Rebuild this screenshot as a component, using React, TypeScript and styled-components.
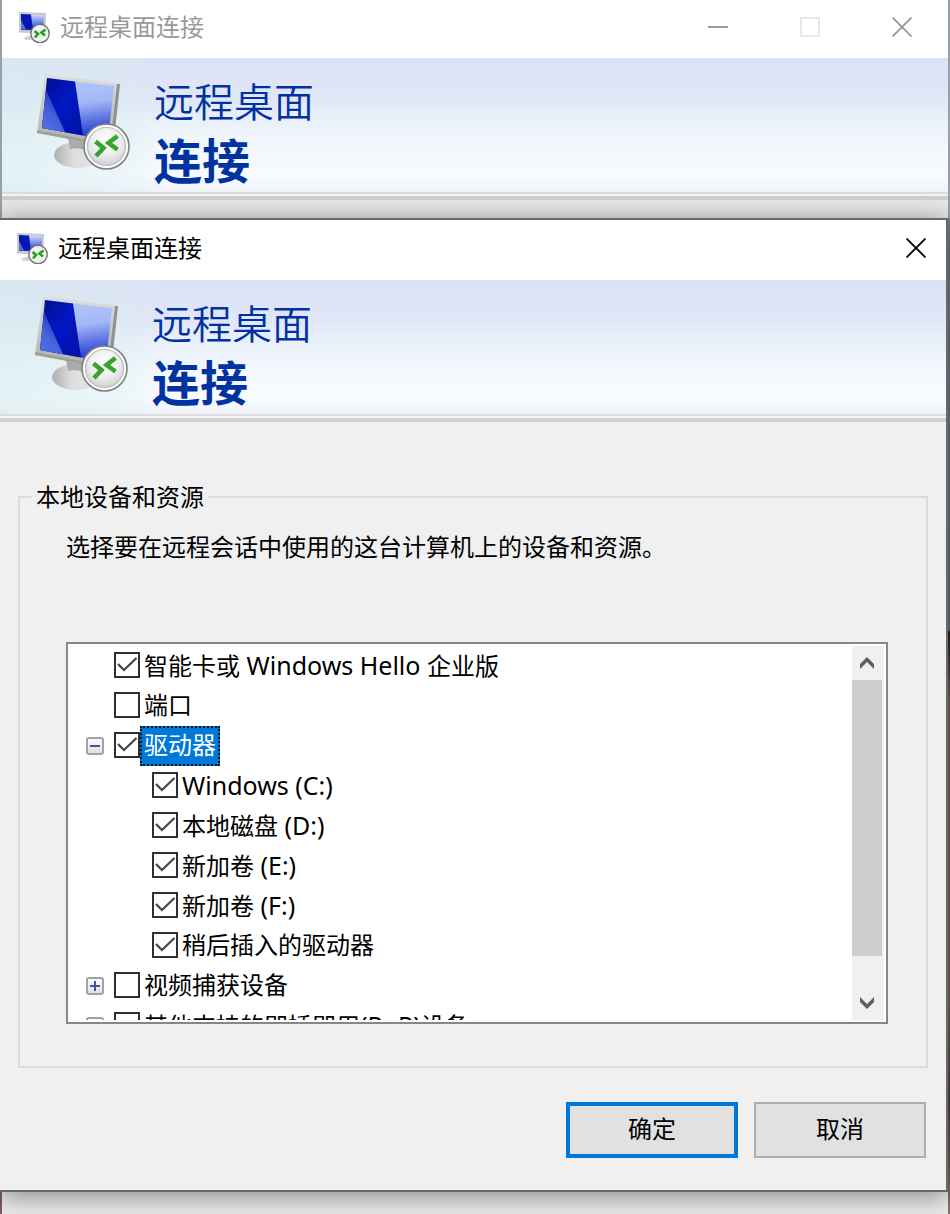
import React, { useId, useState } from "react";
import styled, { createGlobalStyle } from "styled-components";

const GlobalStyle = createGlobalStyle`
  * { box-sizing: border-box; }
  body {
    margin: 0;
    background: #f0f0f0;
    color: #000;
    font-family: "Noto Sans", "Noto Sans CJK SC", sans-serif;
    font-size: 24px;
    line-height: 28px;
  }
  button, input { font: inherit; color: inherit; margin: 0; padding: 0; }
`;

const Desktop = styled.div`
  display: flex;
  flex-direction: column;
  min-height: 100vh;
  overflow: hidden;
  background: linear-gradient(#80848e 0, #6d717a 630px, #2b2224 632px, #7b6466 700px, #7b6466 1000px, #4c4a48 1100px, #8a7274 100%);
`;

const BackWindow = styled.section`
  height: 218px;
  border: solid #989fa8;
  border-width: 0 2px;
  background: #e8e8e8;
`;

const BackFooter = styled.div`
  flex: 1;
  min-height: 22px;
  border-left: 2px solid #855a62;
  margin-right: 2px;
  background: #ececec;
`;

const Dialog = styled.section`
  position: relative;
  z-index: 1;
  margin-right: 2px;
  border: solid #69696c;
  border-width: 2px 2px 2px 0;
  background: #f0f0f0;
  box-shadow: 0 4px 26px rgba(0, 0, 0, 0.45);
`;

const TitleBar = styled.header<{ $active?: boolean }>`
  display: flex;
  align-items: center;
  height: ${(p) => (p.$active ? 60 : 58)}px;
  padding-left: 16px;
  padding-bottom: 4px;
  gap: 10px;
  background: #fff;
  color: ${(p) => (p.$active ? "#000" : "#999")};
`;

const TitleText = styled.span`
  flex: 1;
`;

const Controls = styled.div`
  display: flex;
  align-self: stretch;
`;

const ControlButton = styled.button<{ $narrow?: boolean }>`
  display: grid;
  place-items: center;
  width: ${(p) => (p.$narrow ? 60 : 92)}px;
  border: 0;
  background: none;
`;

const BannerBar = styled.div`
  display: flex;
  align-items: flex-start;
  gap: 22px;
  height: 134px;
  padding: 14px 32px 0;
  background:
    linear-gradient(90deg, rgba(214, 236, 238, 0.6), rgba(214, 236, 238, 0.3) 130px, rgba(214, 236, 238, 0) 160px),
    linear-gradient(#dde1f6, #e0e6f8 30%, #eaf0fa 46%, #f3f8fd 68%, #f8fbff 88%, #f0f3fa);
`;

const BannerTitle = styled.h1`
  margin: 0;
  font-size: 40px;
  font-weight: 350;
  line-height: 59px;
  color: #0033a0;
`;

const BannerStrong = styled.strong`
  display: block;
  font-size: 48px;
  font-weight: 700;
`;

const Divider = styled.div`
  height: 8px;
  border-top: 2px solid #dcdcdc;
  border-bottom: 4px solid #d0d0d0;
  background: #f4f4f4;
`;

const Content = styled.form`
  padding: 61px 18px 32px;
`;

const Group = styled.fieldset`
  min-width: 0;
  margin: 0;
  padding: 0;
  border: 2px solid #dcdcdc;
`;

const GroupLegend = styled.legend`
  margin-left: 12px;
  padding: 0 4px;
`;

const GroupBody = styled.div`
  padding: 22px 38px 42px 46px;
`;

const Description = styled.p`
  margin: 0 0 81px;
`;

const ListBox = styled.div`
  display: flex;
  height: 382px;
  padding: 2px;
  border: 2px solid #828790;
  background: #fff;
`;

const Tree = styled.ul`
  flex: 1;
  margin: 0;
  padding: 0;
  overflow: hidden;
  list-style: none;
`;

const TreeRow = styled.li<{ $child?: boolean }>`
  display: flex;
  align-items: center;
  height: 40px;
  padding-left: ${(p) => (p.$child ? 82 : 16)}px;
  white-space: nowrap;
`;

const ExpanderSlot = styled.span`
  display: flex;
  width: 28px;
`;

const Expander = styled.button`
  display: grid;
  place-items: center;
  width: 18px;
  height: 18px;
  border: 2px solid #a2a2a2;
  border-radius: 3px;
  background: linear-gradient(#fdfdfd, #dfdfdf);
`;

const CheckCell = styled.span`
  display: grid;
  width: 26px;
  height: 26px;
  margin-bottom: 2px;

  > * { grid-area: 1 / 1; }
`;

const CheckInput = styled.input`
  appearance: none;
  width: 26px;
  height: 26px;
  border: 2px solid #303030;
  background: #fff;
`;

const CheckMark = styled.svg`
  pointer-events: none;
`;

const RowLabel = styled.label<{ $selected?: boolean }>`
  height: 40px;
  padding: 0 2px;
  border: 2px dotted transparent;
  line-height: 34px;
  ${(p) => p.$selected && "background: #0078d7; color: #fff; border-color: #111;"}
`;

const LatinText = styled.span`
  font-size: 25px;
  white-space: pre;
`;

const ScrollBar = styled.div`
  display: flex;
  flex-direction: column;
  width: 32px;
  background: #f0f0f0;
`;

const ScrollButton = styled.button`
  display: grid;
  place-items: center;
  width: 30px;
  height: 34px;
  border: 0;
  background: none;
`;

const ScrollTrack = styled.div`
  flex: 1;
`;

const ScrollThumb = styled.div`
  width: 30px;
  height: 276px;
  background: #cdcdcd;
`;

const Actions = styled.div`
  display: flex;
  justify-content: flex-end;
  gap: 16px;
  padding: 34px 2px 0;
`;

const ActionButton = styled.button<{ $primary?: boolean }>`
  width: 172px;
  height: 56px;
  padding-bottom: 2px;
  border: ${(p) => (p.$primary ? "4px solid #0078d7" : "2px solid #adadad")};
  background: #e1e1e1;
`;

function CloseIcon() {
  return (
    <svg width="20" height="20" viewBox="0 0 20 20" fill="none" stroke="currentColor" strokeWidth="1.8">
      <path d="M.5 .5 19.500 19.500M19.500 .5 .5 19.500" />
    </svg>
  );
}

function SmallIcon() {
  const id = useId();
  return (
    <svg width="32" height="32" viewBox="0 0 32 32" aria-hidden="true">
      <defs>
        <linearGradient id={id} x1="0" y1="0" x2="0" y2="1">
          <stop offset="0" stopColor="#d5dfff" />
          <stop offset="1" stopColor="#1c38d6" />
        </linearGradient>
      </defs>
      <path d="M5 27.500 Q10 23 17 26V29H8Z" fill="#d2d2d0" />
      <path d="M1 1 28 2 27.500 23 1 21.500Z" fill="#c9c9c5" />
      <path d="M3 3 26 4 25.500 19 3 18.500Z" fill={`url(#${id})`} />
      <path d="M3 3 13 3.500 15 19 3 18.500Z" fill="#0518b4" />
      <path d="M3 9 8 18.500 3 18Z" fill="#5871dd" />
      <circle cx="22" cy="22.500" r="9.200" fill="#f2f3f1" stroke="#70736f" strokeWidth="1.400" />
      <path d="M16.500 20 20 23 17 26.500M27.500 18.500 23.500 21.500 27 24.500" fill="none" stroke="#23a01d" strokeWidth="2.600" />
    </svg>
  );
}

function MonitorIcon() {
  const id = useId();
  const key = (name: string) => `${id}-${name}`;
  const ref = (name: string) => `url(#${id}-${name})`;
  return (
    <svg width="98" height="102" viewBox="0 0 98 102" aria-hidden="true">
      <defs>
        <linearGradient id={key("glow")} x1="0.5" y1="0" x2="0.65" y2="1">
          <stop offset="0" stopColor="#b4c8fa" />
          <stop offset="0.4" stopColor="#a3b7f6" />
          <stop offset="1" stopColor="#0f2ace" />
        </linearGradient>
        <linearGradient id={key("deep")} x1="0" y1="0" x2="1" y2="1">
          <stop offset="0" stopColor="#000e8c" />
          <stop offset="0.5" stopColor="#0218c4" />
          <stop offset="1" stopColor="#0010a0" />
        </linearGradient>
        <linearGradient id={key("facet")} x1="0" y1="1" x2="0.6" y2="0">
          <stop offset="0" stopColor="#5672e6" />
          <stop offset="0.5" stopColor="#4560da" />
          <stop offset="1" stopColor="#1428b8" />
        </linearGradient>
        <linearGradient id={key("stand")} x1="0" y1="0" x2="1" y2="0">
          <stop offset="0" stopColor="#aeb0b0" />
          <stop offset="0.4" stopColor="#dcdddd" />
          <stop offset="1" stopColor="#e8e8e8" />
        </linearGradient>
        <linearGradient id={key("frame")} x1="0" y1="0" x2="0" y2="1">
          <stop offset="0" stopColor="#dededa" />
          <stop offset="1" stopColor="#aeb0ac" />
        </linearGradient>
        <radialGradient id={key("badge")} cx="0.5" cy="0.35" r="0.65">
          <stop offset="0" stopColor="#ffffff" />
          <stop offset="0.6" stopColor="#ededee" />
          <stop offset="1" stopColor="#cfd1d1" />
        </radialGradient>
      </defs>
      <ellipse cx="44" cy="83" rx="24" ry="13" fill={ref("stand")} />
      <path d="M34 66 58 70 60 82 Q46 74 36 77Z" fill="#a9abac" />
      <path d="M11 2 86 12 79 75 3 61Z" fill={ref("frame")} />
      <path d="M86 12 83 12 76 74 79 75Z" fill="#8f9290" />
      <path d="M3 61 79 75 79 73 3 58Z" fill="#a09f9a" />
      <path d="M13 6 80 14 74 68 8 56Z" fill={ref("glow")} />
      <path d="M13 6 41 9.400 49 63.600 8 56Z" fill={ref("deep")} />
      <path d="M12 18 31 60.200 8 56Z" fill={ref("facet")} />
      <circle cx="72.500" cy="74.500" r="22.500" fill="#fafafa" stroke="#7d817f" strokeWidth="1.600" />
      <circle cx="72.500" cy="74.500" r="19" fill={ref("badge")} stroke="#b9bcbc" strokeWidth="1.200" />
      <path d="M61.500 69.500 69.500 76 62 84M83.500 64 74.500 71 83.500 77.500" fill="none" stroke="#37a42c" strokeWidth="4.600" />
    </svg>
  );
}

function Banner() {
  return (
    <>
      <BannerBar>
        <MonitorIcon />
        <BannerTitle>
          远程桌面
          <BannerStrong>连接</BannerStrong>
        </BannerTitle>
      </BannerBar>
      <Divider />
    </>
  );
}

type Device = {
  label: string;
  checked?: boolean;
  child?: boolean;
  selected?: boolean;
  toggle?: "plus" | "minus";
};

const devices: Device[] = [
  { label: "智能卡或 Windows Hello 企业版", checked: true },
  { label: "端口" },
  { label: "驱动器", checked: true, selected: true, toggle: "minus" },
  { label: "Windows (C:)", checked: true, child: true },
  { label: "本地磁盘 (D:)", checked: true, child: true },
  { label: "新加卷 (E:)", checked: true, child: true },
  { label: "新加卷 (F:)", checked: true, child: true },
  { label: "稍后插入的驱动器", checked: true, child: true },
  { label: "视频捕获设备", toggle: "plus" },
  { label: "其他支持的即插即用(PnP)设备", toggle: "plus" },
];

// Latin runs are set slightly larger so they balance with the Chinese glyphs.
function MixedText({ text }: { text: string }) {
  const runs = text.split(/([\x20-\x7e]+)/).filter(Boolean);
  return (
    <>
      {runs.map((run, i) =>
        /^[\x20-\x7e]/.test(run) ? <LatinText key={i}>{run}</LatinText> : <React.Fragment key={i}>{run}</React.Fragment>
      )}
    </>
  );
}

function DeviceRow({ device }: { device: Device }) {
  const id = useId();
  const [checked, setChecked] = useState(Boolean(device.checked));
  return (
    <TreeRow $child={device.child}>
      {!device.child && (
        <ExpanderSlot>
          {device.toggle && (
            <Expander type="button" aria-label={device.toggle === "plus" ? "展开" : "折叠"}>
              <svg width="10" height="10" viewBox="0 0 10 10" stroke="#3f56a6" strokeWidth="2">
                <path d={device.toggle === "plus" ? "M0 5H10M5 0V10" : "M0 5H10"} />
              </svg>
            </Expander>
          )}
        </ExpanderSlot>
      )}
      <CheckCell>
        <CheckInput id={id} type="checkbox" checked={checked} onChange={(e) => setChecked(e.target.checked)} />
        {checked && (
          <CheckMark width="26" height="26" viewBox="0 0 26 26" fill="none" stroke="#444" strokeWidth="2.200">
            <path d="M4 12 10 18 22.500 6" />
          </CheckMark>
        )}
      </CheckCell>
      <RowLabel htmlFor={id} $selected={device.selected}>
        <MixedText text={device.label} />
      </RowLabel>
    </TreeRow>
  );
}

export default function App() {
  return (
    <>
      <GlobalStyle />
      <Desktop>
        <BackWindow>
          <TitleBar>
            <SmallIcon />
            <TitleText>远程桌面连接</TitleText>
            <Controls>
              <ControlButton aria-label="最小化">
                <svg width="20" height="2" viewBox="0 0 20 2">
                  <path d="M0 0H20V2H0Z" fill="#999" />
                </svg>
              </ControlButton>
              <ControlButton aria-label="最大化" disabled>
                <svg width="20" height="20" viewBox="0 0 20 20">
                  <path d="M1 1H19V19H1Z" fill="none" stroke="#e8e8e8" strokeWidth="2" />
                </svg>
              </ControlButton>
              <ControlButton aria-label="关闭">
                <CloseIcon />
              </ControlButton>
            </Controls>
          </TitleBar>
          <Banner />
        </BackWindow>

        <Dialog role="dialog" aria-label="远程桌面连接">
          <TitleBar $active>
            <SmallIcon />
            <TitleText>远程桌面连接</TitleText>
            <Controls>
              <ControlButton $narrow aria-label="关闭">
                <CloseIcon />
              </ControlButton>
            </Controls>
          </TitleBar>
          <Banner />
          <Content onSubmit={(e) => e.preventDefault()}>
            <Group>
              <GroupLegend>本地设备和资源</GroupLegend>
              <GroupBody>
                <Description>选择要在远程会话中使用的这台计算机上的设备和资源。</Description>
                <ListBox>
                  <Tree>
                    {devices.map((device) => (
                      <DeviceRow key={device.label} device={device} />
                    ))}
                  </Tree>
                  <ScrollBar>
                    <ScrollButton type="button" aria-label="向上滚动">
                      <svg width="14" height="12" viewBox="0 0 14 12">
                        <path d="M7 0 14 7V12L7 5 0 12V7Z" fill="#606060" />
                      </svg>
                    </ScrollButton>
                    <ScrollTrack>
                      <ScrollThumb />
                    </ScrollTrack>
                    <ScrollButton type="button" aria-label="向下滚动">
                      <svg width="14" height="12" viewBox="0 0 14 12">
                        <path d="M7 12 14 5V0L7 7 0 0V5Z" fill="#606060" />
                      </svg>
                    </ScrollButton>
                  </ScrollBar>
                </ListBox>
              </GroupBody>
            </Group>
            <Actions>
              <ActionButton $primary type="submit">确定</ActionButton>
              <ActionButton type="button">取消</ActionButton>
            </Actions>
          </Content>
        </Dialog>
        <BackFooter />
      </Desktop>
    </>
  );
}
